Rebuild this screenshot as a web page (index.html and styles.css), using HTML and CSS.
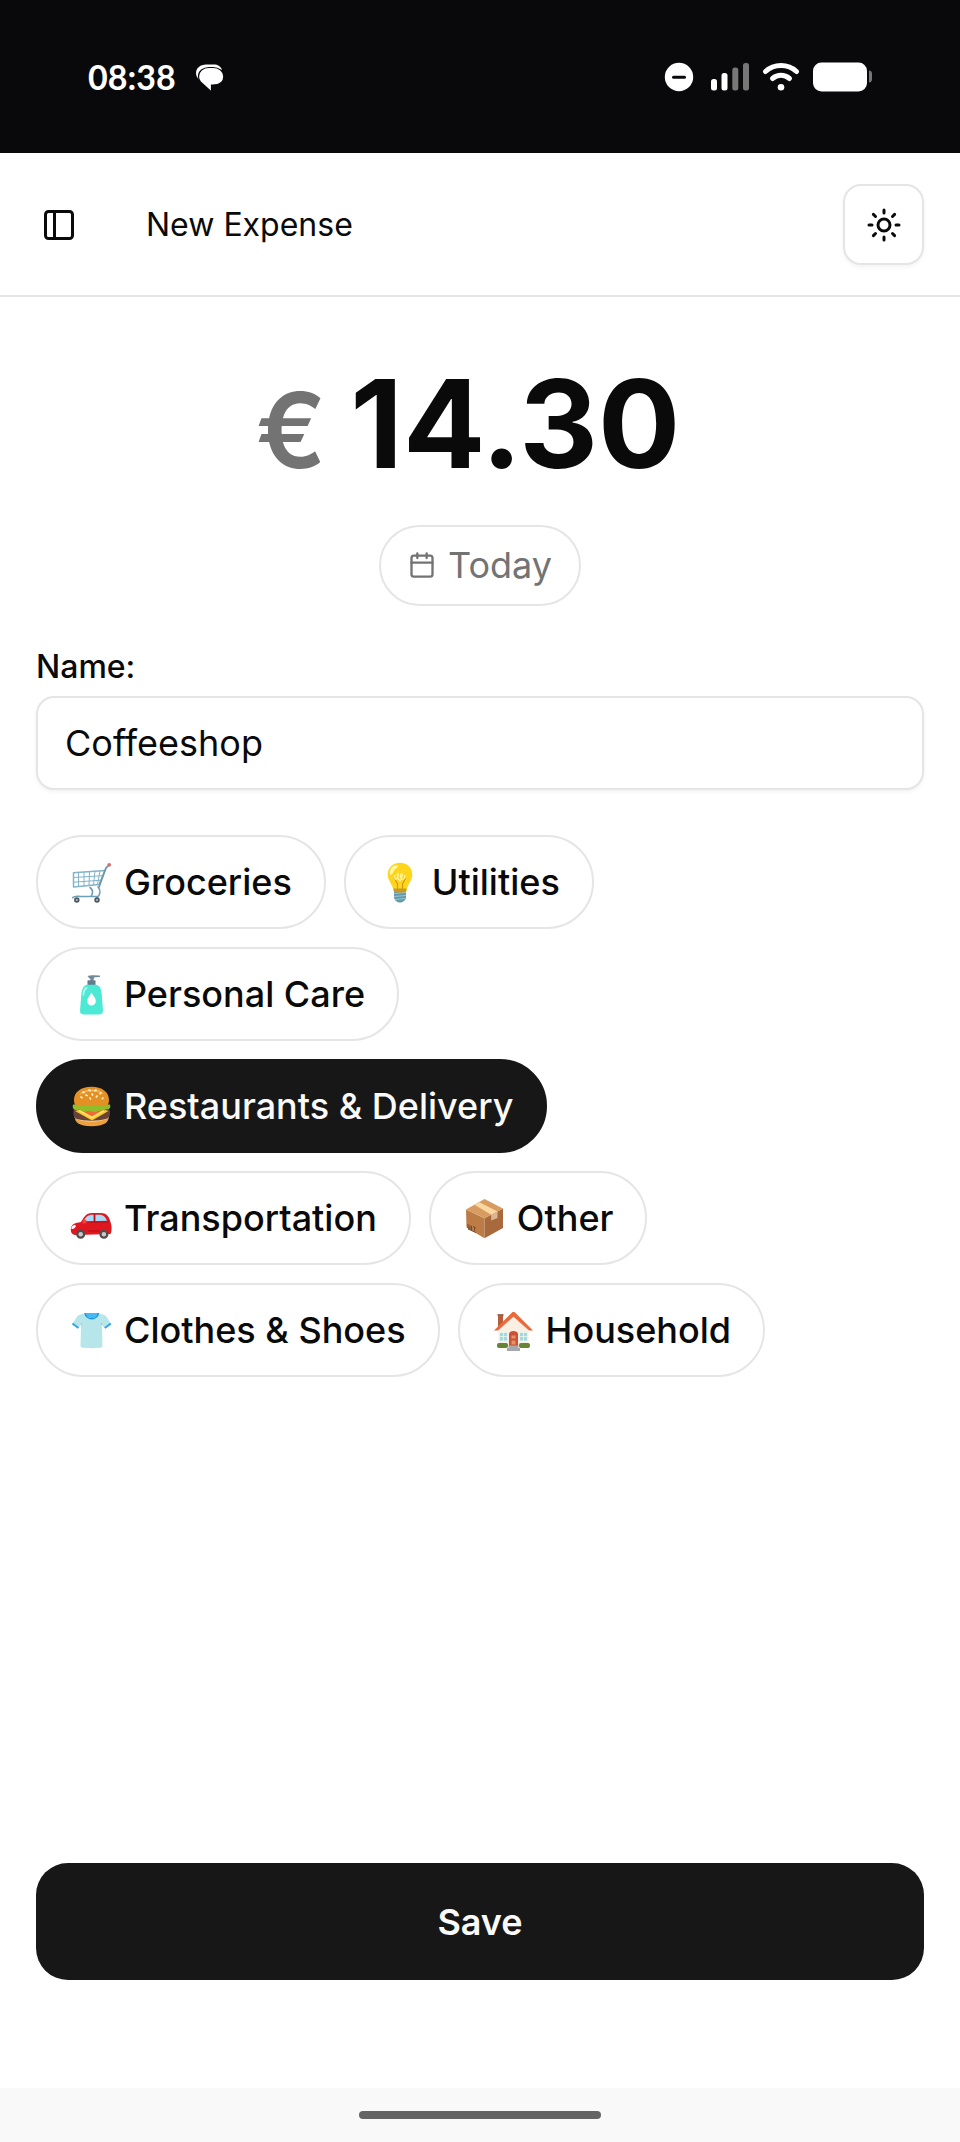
FILE: index.html
```html
<!DOCTYPE html>
<html lang="en">
<head>
<meta charset="utf-8">
<meta name="viewport" content="width=device-width, initial-scale=1">
<title>New Expense</title>
<link rel="stylesheet" href="styles.css">
</head>
<body>
<div class="status-bar">
  <div class="status-left">
    <span class="clock">08:38</span>
    <svg class="chat" width="28" height="30" viewBox="0 0 28 30" aria-hidden="true">
      <path d="M10 2.500h8c4 0 6 1.500 8 5L3 17.500C1 15.500 0 13.500 0 11 0 6 4.500 2.500 10 2.500z" fill="#fff"/>
      <path d="M13 5.500h4c6 0 10.800 3.500 10.800 9S23.500 23 17 23h-1.500v7L4.500 20C3.200 18.500 2.500 16.500 2.500 14.500c0-5.500 4.500-9 10.500-9z" fill="#fff" stroke="#09090b" stroke-width="1.200"/>
    </svg>
  </div>
  <div class="status-right">
    <svg width="32" height="30" viewBox="0 0 32 30" aria-hidden="true"><circle cx="14" cy="15" r="14.200" fill="#fff"/><path d="M8.500 15.200h11" stroke="#09090b" stroke-width="3" stroke-linecap="round"/></svg>
    <svg width="38" height="30" viewBox="0 0 38 30" aria-hidden="true"><g fill="#fff"><rect y="17" width="6" height="11.500" rx="2.500"/><rect x="10.500" y="11" width="6" height="17.500" rx="2.500"/></g><g fill="#777"><rect x="21.300" y="5.500" width="6" height="23" rx="2.500"/><rect x="32" y="1" width="6" height="27.500" rx="2.500"/></g></svg>
    <svg width="36" height="30" viewBox="0 0 36 30" aria-hidden="true"><g fill="none" stroke="#fff" stroke-width="5" stroke-linecap="round"><path d="M2.500 9.500C11 1.500 25 1.500 33.500 9.500"/><path d="M9.500 16.500C14.500 12.300 21.500 12.300 26.500 16.500"/></g><circle cx="18" cy="25.300" r="3.300" fill="#fff"/></svg>
    <svg width="60" height="30" viewBox="0 0 60 30" aria-hidden="true"><rect y=".500" width="54" height="29" rx="8.500" fill="#fff"/><path d="M56 8.500c2 0 3 1.500 3 3.500v5c0 2-1 3.500-3 3.500z" fill="#777"/></svg>
  </div>
</div>

<header class="top-bar">
  <button class="icon-button" type="button" aria-label="Toggle sidebar">
    <svg class="icon" viewBox="0 0 24 24" aria-hidden="true"><rect x="3" y="3" width="18" height="18" rx="2"/><path d="M9 3v18"/></svg>
  </button>
  <h1 class="title">New Expense</h1>
  <button class="theme-button" type="button" aria-label="Toggle theme">
    <svg class="icon" viewBox="0 0 24 24" aria-hidden="true"><circle cx="12" cy="12" r="4"/><path d="M12 2v2M12 20v2M4.930 4.930l1.410 1.410M17.660 17.660l1.410 1.410M2 12h2M20 12h2M6.340 17.660l-1.410 1.410M19.070 4.930l-1.410 1.410"/></svg>
  </button>
</header>

<form class="expense">
  <div class="amount">
    <label class="currency" for="amount">€</label>
    <input class="amount-input" id="amount" type="text" inputmode="decimal" value="14.30">
  </div>
  <button class="date" type="button">
    <svg class="date-icon" viewBox="0 0 24 24" aria-hidden="true"><path d="M8 2v4M16 2v4M3 10h18"/><rect x="3" y="4" width="18" height="18" rx="2"/></svg>
    Today
  </button>

  <div class="field">
    <label class="label" for="name">Name:</label>
    <input class="text-input" id="name" type="text" value="Coffeeshop">
  </div>

  <div class="chips">
    <button class="chip" type="button" aria-pressed="false">
      <svg class="emoji" viewBox="0 0 40 40" aria-hidden="true">
        <g fill="none" stroke="#82b3c9" stroke-linecap="round" stroke-linejoin="round">
          <path d="M1.500 10.700 33 8.500 27 22.500 1.500 25z" stroke-width="1.500"/>
          <path d="M1.500 15.500l29-1.800M1.500 20.200l27.500-2M6.500 10.500V24.500M12 10v14M17.500 9.600l-.5 13.800M23 9.200l-1.500 13.700M28 9l-2.500 13.500" stroke-width="1"/>
          <path d="M36.500 3.500c-2.500 1.500-3 3-3.500 5L27 25" stroke="#7096a9" stroke-width="1.800"/>
          <path d="M18 25.500c4 3 3 6 1 9M26 25c3 3 2.500 8-1 10.500M.700 35.700C3 33.500 5 34.500 9 34.500h17" stroke="#6f9fb7" stroke-width="1.600"/>
        </g>
        <circle cx="37.200" cy="2.800" r="1.900" fill="#d9706b"/>
        <g fill="#b8c1c6" stroke="#4d5960" stroke-width="1.700"><circle cx="4.800" cy="38" r="1.900"/><circle cx="25" cy="38" r="1.900"/></g>
      </svg>
      Groceries
    </button>
    <button class="chip" type="button" aria-pressed="false">
      <svg class="emoji" viewBox="0 0 40 40" aria-hidden="true">
        <path d="M14 28h12v7c0 3-3 5.500-6 5.500S14 38 14 35z" fill="#6298aa"/>
        <path d="M14 31.500l12-1M14 34.500l12-1M15 37.500l10-1" stroke="#9cc7d3" stroke-width="1"/>
        <path d="M20 .700C12.500.700 7.700 6 7.700 12.500c0 6 4.800 9.500 6 16.500 3 1.500 9.800 1.500 12.800 0 1-7 5.800-10.500 5.800-16.500C32.300 6 27.500.700 20 .700z" fill="#fdd51d"/>
        <path d="M13.500 26.500h13l-.3 3c-3 1.300-9.400 1.300-12.400 0z" fill="#c99b21"/>
        <path d="M17.500 28v-6l-3-6M22.500 28v-6l3-6" fill="none" stroke="#cf9515" stroke-width="1.100"/>
        <path d="M15 13c-1 5 2 6 3 1s-2-2 0 2 3 3 4-2-3-1-1 2 4 1 4-3" fill="none" stroke="#fff3a0" stroke-width="1.300"/>
        <path d="M9.800 11C10 6 13 3 17 3.200c2 .5 1 2-1 3.300-2.500 1.500-3 5.500-4.500 6.200-1 .3-1.700-.3-1.700-1.700z" fill="#fff6a6"/>
      </svg>
      Utilities
    </button>
    <button class="chip" type="button" aria-pressed="false">
      <svg class="emoji" viewBox="0 0 40 40" aria-hidden="true">
        <path d="M15.500 2c2-.7 4-1 6-.8l6 .2c.8.300.8 1.500 0 1.600l-5 .3-1 2.200V7h-3V5.500L16.500 3.300z" fill="#72899a"/>
        <rect x="15.500" y="6.300" width="8" height="5.500" rx="1" fill="#657c8c"/>
        <path d="M15 10.800h9c4.500 1 5.300 5 5.800 10L31 37c0 2.500-2 3.400-4 3.400H12c-2.500 0-4-1-4-3.400l1.300-16.200c.5-5 1.700-9 5.700-10z" fill="#4ce9d5"/>
        <path d="M19.500 18.500c2 3.500 4.300 5.700 4.300 8.700 0 2.600-1.800 4.300-4.300 4.300s-4.300-1.700-4.300-4.300c0-3 2.300-5.200 4.300-8.700z" fill="#fff"/>
        <path d="M14.500 13.800c-2 1.500-3 5-3 7" fill="none" stroke="#bbfff3" stroke-width="1.700" stroke-linecap="round"/>
      </svg>
      Personal Care
    </button>
    <button class="chip chip-selected" type="button" aria-pressed="true">
      <svg class="emoji" viewBox="0 0 40 40" aria-hidden="true">
        <path d="M3 30h33.500c1 6-4.500 10.300-17 10.300S2 36 3 30z" fill="#eda13c"/>
        <path d="M2.800 31c8 5 25 5 33.700 0" stroke="#ffd084" stroke-width="2" fill="none"/>
        <path d="M1.800 23.500c11-3 24-3 35.500 0 1.500 3 .8 7.500-2 9-10 3-22 3-32 0-2-2-2.500-6-1.500-9z" fill="#66433a"/>
        <path d="M3 25l17 9.500L36.500 25c-8-3-25-3-33.500 0z" fill="#ffc629"/>
        <path d="M8 24l12 7 13-7z" fill="#f06b34"/><path d="M7 24.500l13 7 12-7" fill="none" stroke="#ffe36a" stroke-width="1.700"/>
        <path d="M1 18.500h37c1 3-.5 5-3 4.800-3 0-3 1.700-6 1.300-3-.5-4 2-7 1.400-4-.8-5-1.500-8-.5-4 1-5-2.500-8-1.500C2 25 0 22 1 18.500z" fill="#91bd29"/>
        <path d="M2 14c0-8 7-13.300 17.500-13.300S37 6 37 14c0 4-1.500 6.300-5 6.300-9-1.200-17-1.200-25 0C3.500 20.300 2 18 2 14z" fill="#e39124"/>
        <path d="M7 9C10 3 26 1 32 8c-7-3-17-4-25 1z" fill="#f2b457"/>
        <path d="M11 6l1 .7M17 4l1 .7M24 4l-1 .7M29 7l-1 .7M20 8l.6 1M14 9l1 .6M9 11l1 .7M25 10l-.7 1M18 12l.5 1M31 12l-.7.700" stroke="#fff6dd" stroke-width="1.600" stroke-linecap="round"/>
      </svg>
      Restaurants &amp; Delivery
    </button>
    <button class="chip" type="button" aria-pressed="false">
      <svg class="emoji" viewBox="0 0 40 40" aria-hidden="true">
        <path d="M9 24c3-5 5-9 11-9h9c5 0 8 3 9.500 9 1.500 4 1.500 9 0 12L4 37C0 37-1.300 34.500-1.200 31-.500 26 3 25 9 24z" fill="#df1820"/>
        <path d="M11 23.500c2.500-4 4.500-6.500 8-6.800h8.500c4 0 6 2.500 7.500 6z" fill="#a8dafb"/>
        <path d="M22.500 16v8" stroke="#bd1018" stroke-width="1.800"/>
        <path d="M3 27c-2 0-4 2-3.500 4 2 .5 4-1.500 4.500-3.300z" fill="#fff"/>
        <path d="M11 24h26M16 33h12" stroke="#b20c18" stroke-width="1"/><rect x="10.500" y="21.500" width="4" height="4" rx="1.500" fill="#f44336"/>
        <g fill="#c7cbce" stroke="#574b4b" stroke-width="2.300"><circle cx="8.700" cy="36.300" r="3.400"/><circle cx="31.900" cy="36.300" r="3.400"/></g>
      </svg>
      Transportation
    </button>
    <button class="chip" type="button" aria-pressed="false">
      <svg class="emoji" viewBox="0 0 40 40" aria-hidden="true">
        <path d="M1 11.500l18.500 8.800v20L1.500 29.500z" fill="#bd7c45"/><path d="M38 10.500l-18.500 9.800v20L38 30z" fill="#a8693c"/>
        <path d="M19.500 1L38 10.500l-18.500 9.800L1 11.500z" fill="#d89c61"/>
        <path d="M9.500 6.700l5-2.500 18 9.300-6.300 3.200z" fill="#fad7a0"/><path d="M26.200 16.700l6.300-3.200v6.500l-6.300 2.500z" fill="#dcb694"/>
        <path d="M3 26v4l2 1v-4M6.500 28v4M8 28.500l3 1.500M9.500 29.500v3M3 31l8 3.500" fill="none" stroke="#754a30" stroke-width="1"/>
      </svg>
      Other
    </button>
    <button class="chip" type="button" aria-pressed="false">
      <svg class="emoji" viewBox="0 0 40 40" aria-hidden="true">
        <path d="M13 3.500C7 4 5 6 3.500 9L0 14.500l6 4 3-3.500-.5 21c0 1.300 1 1.700 2 1.800 6 .5 12 .5 18 0 1.300 0 2-.7 2-2L30 15l3 3.500 6.300-4L36 9c-1.500-3-4-5-9.500-5.500z" fill="#b6e6e9"/>
        <path d="M.500 13.500l6 4.500M38.800 13.500l-6 4.500" stroke="#31a7e8" stroke-width="2"/>
        <path d="M13 3c1 6.500 12.500 6.500 13.500 0z" fill="#45b9f5"/><path d="M13 3c1 7.500 12.500 7.500 13.500 0" fill="none" stroke="#2298dc" stroke-width="1.600"/>
        <path d="M9 15l1-2M30 15l-1-2" stroke="#92cbd0" stroke-width="1"/>
      </svg>
      Clothes &amp; Shoes
    </button>
    <button class="chip" type="button" aria-pressed="false">
      <svg class="emoji" viewBox="0 0 40 40" aria-hidden="true">
        <path d="M4 5.500h5V16l-5 4z" fill="#b85d3b"/><path d="M3.500 5h6" stroke="#8b4938" stroke-width="1.600"/>
        <path d="M19.500 6L4.500 20v17h30V20z" fill="#fbeee3"/>
        <path d="M0 20.500L18.500 2h2L39 20.500h-4L19.500 6.700 4 20.500z" fill="#e96b3d"/>
        <g fill="#a6d7d9" stroke="#eaf7f5" stroke-width=".8"><rect x="5.500" y="22.500" width="8" height="8.500"/><rect x="25.500" y="22.500" width="8" height="8.500"/><path d="M9.500 22.500V31M29.500 22.500V31M5.500 26.500h8M25.500 26.500h8"/></g>
        <path d="M15 36V24c0-4 9-4 9 0v12z" fill="#c85336"/><path d="M17.500 25.500h4v3h-4zM17.500 30.500h4v4h-4z" fill="#e79069"/>
        <rect x="3" y="33" width="11" height="5" rx="2" fill="#678334"/><rect x="25" y="33" width="11" height="5" rx="2" fill="#678334"/>
        <path d="M14.500 35.500h10V38H26v3H13v-3h1.500z" fill="#a5a9ac"/>
      </svg>
      Household
    </button>
  </div>

  <button class="save" type="submit">Save</button>
</form>

<div class="nav-bar"><div class="nav-handle"></div></div>
</body>
</html>
```
FILE: styles.css
```css
* {
  box-sizing: border-box;
}

body {
  margin: 0;
  min-height: 100vh;
  display: flex;
  flex-direction: column;
  background: #fff;
  color: #0a0a0a;
  font-family: Inter, "Liberation Sans", sans-serif;
  font-size: 36px;
}

button,
input {
  margin: 0;
  font: inherit;
  color: inherit;
}

button {
  cursor: pointer;
}

svg {
  display: block;
  flex: none;
  overflow: visible;
}

.status-bar {
  display: flex;
  align-items: center;
  justify-content: space-between;
  padding: 57px 87px 56px 88px;
  background: #09090b;
  color: #fff;
}

.status-left {
  display: flex;
  align-items: center;
  gap: 20px;
}

.clock {
  font-family: Lato, sans-serif;
  font-size: 34px;
  font-weight: 700;
  line-height: 40px;
}

.status-right {
  display: flex;
  align-items: center;
  gap: 14px;
}

.top-bar {
  display: flex;
  align-items: center;
  padding: 31px 36px 30px;
  border-bottom: 2px solid #e5e5e5;
}

.icon {
  width: 36px;
  height: 36px;
  fill: none;
  stroke: currentColor;
  stroke-width: 2;
  stroke-linecap: round;
  stroke-linejoin: round;
}

.icon-button {
  padding: 5px;
  border: 0;
  background: none;
}

.title {
  flex: 1;
  margin: 0 0 0 64px;
  font-size: 32px;
  font-weight: 400;
  line-height: 48px;
}

.theme-button {
  display: grid;
  place-items: center;
  width: 81px;
  height: 81px;
  padding: 0;
  border: 2px solid #e5e5e5;
  border-radius: 18px;
  background: #fff;
  box-shadow: 0 2px 4px rgb(0 0 0 / 5%);
}

.expense {
  flex: 1;
  display: flex;
  flex-direction: column;
  padding: 53px 36px 108px;
}

.amount {
  display: flex;
  justify-content: center;
  align-items: baseline;
  gap: 24px;
}

.currency {
  color: #737373;
  font-size: 104px;
  font-weight: 600;
  line-height: 120px;
}

.amount-input {
  width: 354px;
  height: 146px;
  padding: 0;
  border: 0;
  background: none;
  font-size: 122px;
  font-weight: 700;
}

.date {
  align-self: center;
  display: flex;
  align-items: center;
  gap: 12px;
  margin-top: 29px;
  padding: 14px 27px 15px;
  border: 2px solid #e5e5e5;
  border-radius: 41px;
  background: #fff;
  color: #737373;
  line-height: 48px;
}

.date-icon {
  width: 28px;
  height: 28px;
  fill: none;
  stroke: currentColor;
  stroke-width: 2;
  stroke-linecap: round;
  stroke-linejoin: round;
}

.field {
  display: flex;
  flex-direction: column;
  gap: 13px;
  margin-top: 45px;
}

.label {
  font-size: 32px;
  font-weight: 500;
  line-height: 32px;
}

.text-input {
  width: 100%;
  height: 94px;
  padding: 0 27px;
  border: 2px solid #e5e5e5;
  border-radius: 18px;
  background: #fff;
  box-shadow: 0 2px 4px rgb(0 0 0 / 5%);
}

.chips {
  display: flex;
  flex-wrap: wrap;
  gap: 18px;
  margin-top: 45px;
}

.chip {
  display: flex;
  align-items: center;
  gap: 12px;
  padding: 21px 32px 21px 34px;
  border: 2px solid #e5e5e5;
  border-radius: 47px;
  background: #fff;
  font-weight: 500;
  line-height: 48px;
}

.chip-selected {
  border-color: #171717;
  background: #171717;
  color: #fafafa;
}

.emoji {
  width: 40px;
  height: 40px;
}

.save {
  margin-top: auto;
  padding: 35px 34px 33px;
  border: 0;
  border-radius: 32px;
  background: #171717;
  color: #fafafa;
  font-weight: 600;
  line-height: 49px;
}

.nav-bar {
  display: flex;
  justify-content: center;
  padding: 23px;
  background: #f9f9f9;
}

.nav-handle {
  width: 242px;
  height: 8px;
  border-radius: 4px;
  background: #646464;
}
```
